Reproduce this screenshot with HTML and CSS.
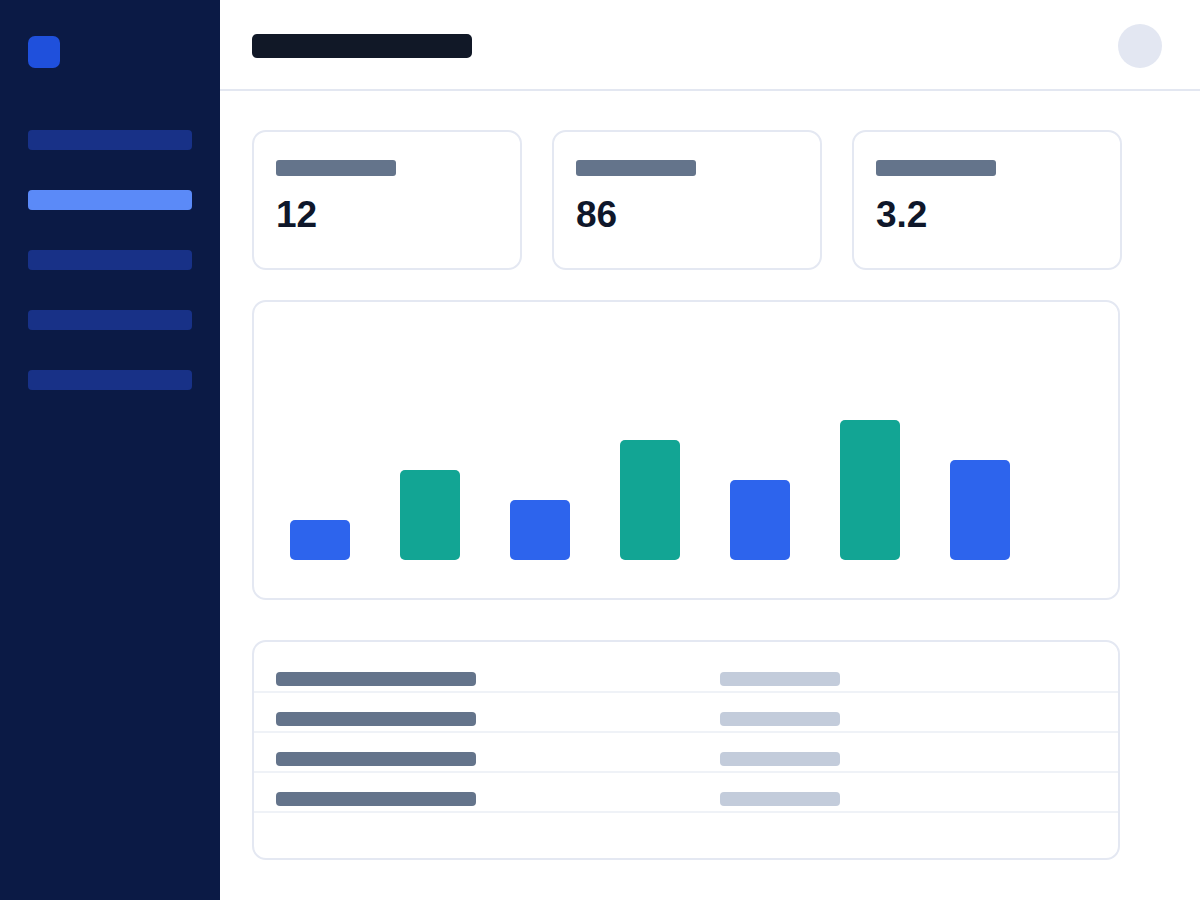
FILE: index.html
```html
<!DOCTYPE html>
<html lang="en">
<head>
<meta charset="utf-8">
<title>Dashboard</title>
<link rel="stylesheet" href="styles.css">
</head>
<body>
<div class="app">
  <aside class="sidebar">
    <div class="logo"></div>
    <nav class="nav">
      <div class="nav-item"></div>
      <div class="nav-item active"></div>
      <div class="nav-item"></div>
      <div class="nav-item"></div>
      <div class="nav-item"></div>
    </nav>
  </aside>
  <div class="main">
    <header class="header">
      <div class="title"></div>
      <div class="avatar"></div>
    </header>
    <div class="content">
      <section class="stats">
        <div class="card stat">
          <div class="stat-label"></div>
          <div class="stat-value">12</div>
        </div>
        <div class="card stat">
          <div class="stat-label"></div>
          <div class="stat-value">86</div>
        </div>
        <div class="card stat">
          <div class="stat-label"></div>
          <div class="stat-value">3.2</div>
        </div>
      </section>
      <section class="card chart">
        <div class="bar blue" style="height:40px"></div>
        <div class="bar teal" style="height:90px"></div>
        <div class="bar blue" style="height:60px"></div>
        <div class="bar teal" style="height:120px"></div>
        <div class="bar blue" style="height:80px"></div>
        <div class="bar teal" style="height:140px"></div>
        <div class="bar blue" style="height:100px"></div>
      </section>
      <section class="card table">
        <div class="row"><div class="cell-a"></div><div class="cell-b"></div></div>
        <div class="row"><div class="cell-a"></div><div class="cell-b"></div></div>
        <div class="row"><div class="cell-a"></div><div class="cell-b"></div></div>
        <div class="row"><div class="cell-a"></div><div class="cell-b"></div></div>
      </section>
    </div>
  </div>
</div>
</body>
</html>
```

FILE: styles.css
```css
* { box-sizing: border-box; }
html, body { margin: 0; padding: 0; }
body {
  font-family: "Liberation Sans", Arial, sans-serif;
  background: #ffffff;
  width: 1200px;
  height: 900px;
  overflow: hidden;
}
.app {
  display: flex;
  height: 900px;
}
.sidebar {
  width: 220px;
  flex: none;
  background: #0b1a45;
  padding: 36px 28px 0;
}
.logo {
  width: 32px;
  height: 32px;
  border-radius: 7px;
  background: #1f50dc;
}
.nav {
  margin-top: 62px;
  display: flex;
  flex-direction: column;
  gap: 40px;
}
.nav-item {
  height: 20px;
  width: 164px;
  border-radius: 4px;
  background: #183187;
}
.nav-item.active { background: #5b8af8; }

.main {
  flex: 1;
  display: flex;
  flex-direction: column;
}
.header {
  height: 91px;
  border-bottom: 2px solid #e3e7f1;
  display: flex;
  align-items: center;
  justify-content: space-between;
  padding: 2px 38px 0 32px;
}
.title {
  width: 220px;
  height: 24px;
  border-radius: 5px;
  background: #111827;
}
.avatar {
  width: 44px;
  height: 44px;
  border-radius: 50%;
  background: #e3e7f2;
}
.content {
  padding: 39px 32px 0;
  display: flex;
  flex-direction: column;
}
.card {
  border: 2px solid #e4e8f2;
  border-radius: 14px;
  background: #fff;
}
.stats {
  display: grid;
  grid-template-columns: 270px 270px 270px;
  gap: 30px;
}
.stat {
  height: 140px;
  padding: 28px 22px 0;
}
.stat-label {
  width: 120px;
  height: 16px;
  border-radius: 3px;
  background: #64748b;
}
.stat-value {
  margin-top: 17px;
  font-size: 37px;
  line-height: 44px;
  font-weight: 700;
  color: #0f172a;
}
.chart {
  margin-top: 30px;
  width: 868px;
  height: 300px;
  display: flex;
  align-items: flex-end;
  gap: 50px;
  padding: 0 0 38px 36px;
}
.bar {
  width: 60px;
  border-radius: 5px;
}
.bar.blue { background: #2d64ed; }
.bar.teal { background: #12a594; }

.table {
  margin-top: 40px;
  width: 868px;
  height: 220px;
  padding-top: 11px;
}
.row {
  height: 40px;
  border-bottom: 2px solid #eff2f7;
  display: flex;
  align-items: flex-end;
  padding: 0 0 5px 22px;
}
.cell-a {
  width: 200px;
  height: 14px;
  border-radius: 4px;
  background: #64748b;
}
.cell-b {
  margin-left: 244px;
  width: 120px;
  height: 14px;
  border-radius: 4px;
  background: #c3ccdb;
}
```
